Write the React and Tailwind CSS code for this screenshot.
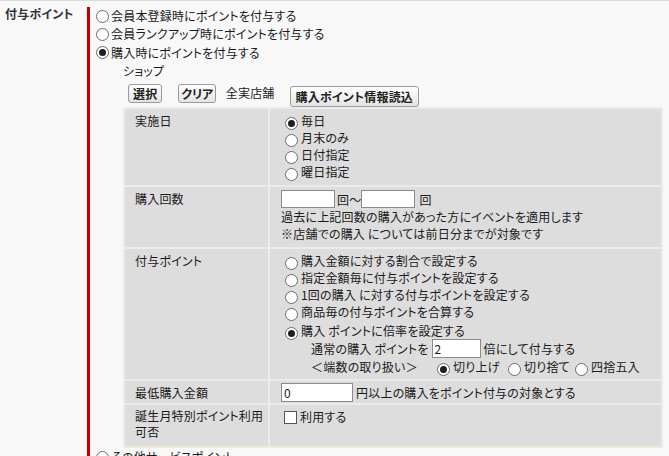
import React from "react";

const Radio = ({ checked, className = "" }) => (
  <span
    className={
      "flex w-[13px] h-[13px] shrink-0 items-center justify-center rounded-full border border-[#6b6b6b] bg-white " +
      className
    }
  >
    {checked ? <span className="block w-[7px] h-[7px] rounded-full bg-[#1e1e1e]" /> : null}
  </span>
);

const TopRadio = ({ checked, children, className = "" }) => (
  <div className={"flex h-[18px] items-center whitespace-nowrap " + className}>
    <Radio checked={checked} className="mr-[2px]" />
    <span>{children}</span>
  </div>
);

const CellRadio = ({ checked, children }) => (
  <div className="flex h-[17px] items-start whitespace-nowrap leading-[17px]">
    <Radio checked={checked} className="mt-[5px] ml-[4px] mr-[3px]" />
    <span>{children}</span>
  </div>
);

const Btn = ({ children, className = "" }) => (
  <button
    className={
      "flex items-center whitespace-nowrap rounded-[3px] border border-[#9a9a9a] bg-gradient-to-b from-white to-[#e4e4e4] font-bold leading-none text-[#222] " +
      className
    }
  >
    {children}
  </button>
);

const TextBox = ({ value = "", className = "" }) => (
  <span
    className={
      "flex shrink-0 items-center border border-[#8a8a8a] bg-white pl-[2px] text-[12px] leading-none " + className
    }
  >
    {value}
  </span>
);

const Label = ({ children }) => (
  <div className="bg-[#dddddd] pl-[10px] pt-[3px] leading-[17px]">{children}</div>
);

export default function App() {
  return (
    <div className="flex h-[456px] w-[669px] overflow-hidden border-t border-[#dcdcdc] bg-[#f8f8f8] font-['Noto_Sans_CJK_JP','Noto_Sans_CJK_SC',sans-serif] text-[12px] tracking-[0.2px] text-[#1a1a1a] [font-feature-settings:'palt']">
      <div className="w-[87px] shrink-0 pl-[5px] pt-[4px] font-bold leading-[17px] text-[#333]">付与ポイント</div>
      <div className="mt-[6px] flex-1 border-l-[3px] border-[#c00000] pl-[6px]">
        <TopRadio>会員本登録時にポイントを付与する</TopRadio>
        <TopRadio>会員ランクアップ時にポイントを付与する</TopRadio>
        <TopRadio checked className="h-[19px]">購入時にポイントを付与する</TopRadio>
        <div className="ml-[27px] h-[17px] leading-[17px]">ショップ</div>
        <div className="ml-[27px] flex h-[28px] items-start">
          <Btn className="ml-[5px] mt-[5px] h-[19px] px-[4px]">選択</Btn>
          <Btn className="ml-[16px] mt-[5px] h-[19px] px-[2px] tracking-[-0.3px]">クリア</Btn>
          <span className="ml-[10px] mt-[5px] leading-[17px]">全実店舗</span>
          <Btn className="ml-[15px] mt-[7px] h-[21px] px-[5px]">購入ポイント情報読込</Btn>
        </div>
        <div className="ml-[27px] w-[540px]">
          <div className="grid grid-cols-[143px_391px] gap-[2px] bg-[#ebebeb] p-[2px] pb-0">
            <Label>実施日</Label>
            <div className="bg-[#dddddd] pb-[5px] pl-[11px] pt-[3px]">
              <CellRadio checked>毎日</CellRadio>
              <CellRadio>月末のみ</CellRadio>
              <CellRadio>日付指定</CellRadio>
              <CellRadio>曜日指定</CellRadio>
            </div>

            <Label>購入回数</Label>
            <div className="bg-[#dddddd] pb-[5px] pl-[11px] pt-[3px] leading-[17px]">
              <div className="flex h-[18px] items-center">
                <TextBox className="h-[18px] w-[54px]" />
                <span className="ml-[2px]">回～</span>
                <TextBox className="h-[18px] w-[54px]" />
                <span className="ml-[4px]">回</span>
              </div>
              <div>過去に上記回数の購入があった方にイベントを適用します</div>
              <div>※店舗での購入 については前日分までが対象です</div>
            </div>

            <Label>付与ポイント</Label>
            <div className="bg-[#dddddd] pb-[4px] pl-[11px] pt-[3px] leading-[17px]">
              <CellRadio>購入金額に対する割合で設定する</CellRadio>
              <CellRadio>指定金額毎に付与ポイントを設定する</CellRadio>
              <CellRadio>1回の購入 に対する付与ポイントを設定する</CellRadio>
              <CellRadio>商品毎の付与ポイントを合算する</CellRadio>
              <div className="mt-[2px]">
                <CellRadio checked>購入 ポイントに倍率を設定する</CellRadio>
              </div>
              <div className="ml-[30px] flex h-[19px] items-center whitespace-nowrap">
                <span>通常の購入 ポイントを</span>
                <TextBox value="2" className="ml-[3px] h-[19px] w-[49px]" />
                <span className="ml-[3px]">倍にして付与する</span>
              </div>
              <div className="ml-[30px] flex h-[17px] items-start whitespace-nowrap">
                <span className="w-[126px] shrink-0">＜端数の取り扱い＞</span>
                <Radio checked className="mt-[5px] mr-[3px]" />
                <span className="w-[52px] shrink-0">切り上げ</span>
                <Radio className="ml-[3px] mt-[5px] mr-[3px]" />
                <span className="w-[48px] shrink-0">切り捨て</span>
                <Radio className="ml-[3px] mt-[5px] mr-[3px]" />
                <span>四捨五入</span>
              </div>
            </div>

            <Label>最低購入金額</Label>
            <div className="flex items-start whitespace-nowrap bg-[#dddddd] pb-[1px] pl-[11px] pt-[2px] leading-[17px]">
              <TextBox value="0" className="h-[19px] w-[72px]" />
              <span className="ml-[3px] mt-[1px]">円以上の購入をポイント付与の対象とする</span>
            </div>

            <div className="h-[41px] bg-[#dddddd] pl-[10px] pt-[3px] leading-[16px]">
              誕生月特別ポイント利用
              <br />
              可否
            </div>
            <div className="bg-[#dddddd] pl-[14px] pt-[3px] leading-[17px]">
              <div className="flex items-start">
                <span className="mt-[3px] mr-[3px] block h-[13px] w-[13px] border border-[#555] bg-white" />
                <span>利用する</span>
              </div>
            </div>
          </div>
          <div className="h-[2px] bg-[#f0ecd6]" />
        </div>
        <TopRadio>その他サービスポイント</TopRadio>
      </div>
    </div>
  );
}
